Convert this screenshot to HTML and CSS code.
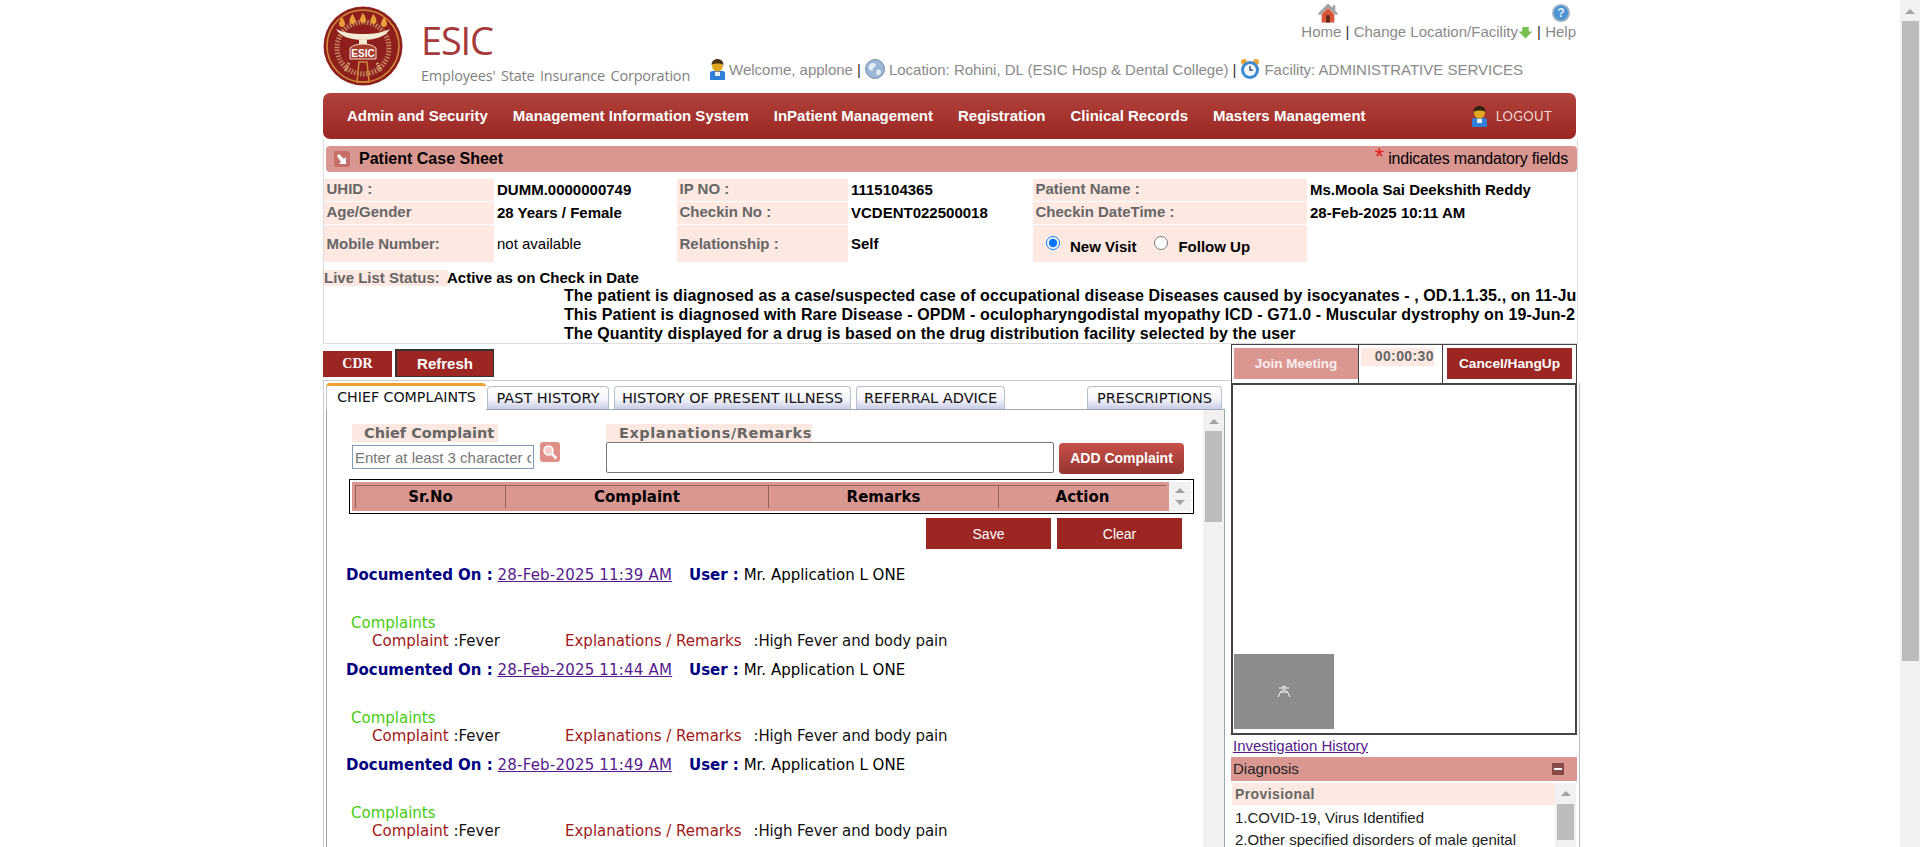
FILE: index.html
```html
<!DOCTYPE html>
<html lang="en">
<head>
    <meta charset="UTF-8">
    <meta name="viewport" content="width=device-width, initial-scale=1.0">
    <title>Patient Case Sheet</title>
    <link rel="stylesheet" href="styles.css">
</head>
<body>
    <div class="page-wrap">
    <div class="page">
        <!-- header -->
        <div class="header">
            <svg class="logo" width="80" height="80" viewBox="0 0 80 80">
                <circle cx="40" cy="40" r="39.5" fill="#8e1f1c"/>
                <circle cx="40" cy="40" r="36" fill="none" stroke="#d08a3c" stroke-width="1.6"/>
                <circle cx="40" cy="42" r="26" fill="none" stroke="#d8a878" stroke-width="5" stroke-dasharray="1.5 1.5" opacity="0.75"/>
                <circle cx="40" cy="40" r="21" fill="#8e1f1c"/>
                <path d="M19 11c-2 3-3 5-3 7s1.500 3 3 3 3-1 3-3-1-4-3-7zM29.500 8c-2 3-3 5-3 7s1.500 3 3 3 3-1 3-3-1-4-3-7zM40 7c-2 3-3 5-3 7s1.500 3 3 3 3-1 3-3-1-4-3-7zM50.500 8c-2 3-3 5-3 7s1.500 3 3 3 3-1 3-3-1-4-3-7zM61 11c-2 3-3 5-3 7s1.500 3 3 3 3-1 3-3-1-4-3-7z" fill="#e8a03c"/>
                <path d="M13 23c4 7 14 11 27 11s23-4 27-11c-8 4-17 5-27 5s-19-1-27-5z" fill="#f5ead2"/>
                <path d="M36 34h8v5h-8z" fill="#f5ead2"/>
                <path d="M27 42c3-3 8-4 13-4s10 1 13 4v11H27z" fill="#a83a2e" stroke="#f0dcc0" stroke-width="1"/>
                <text x="40" y="51" class="logo-text" text-anchor="middle">ESIC</text>
                <path d="M36 56h8l2 20H34z" fill="none" stroke="#d08a3c" stroke-width="1.500"/>
                <path d="M26 57l-4 8M54 57l4 8" stroke="#d8a878" stroke-width="3" stroke-dasharray="1.500 1"/>
            </svg>
            <div class="brand">
                <div class="brand-name">ESIC</div>
                <div class="brand-sub">Employees' State Insurance Corporation</div>
            </div>
            <div class="header-info">
                <div class="top-links">
                    <div class="top-icons">
                        <svg class="home-icon" width="20" height="20" viewBox="0 0 22 21">
                            <path d="M11 0L0 11l2 2 9-8 9 8 2-2-3-3V2h-3v3z" fill="#a2a2a2"/>
                            <path d="M4 12l7-7 7 7v9H4z" fill="#d9553a"/>
                            <path d="M9 13h4v8H9z" fill="#5a2a1e"/>
                        </svg>
                        <svg class="help-icon" width="20" height="20" viewBox="0 0 20 21">
                            <circle cx="10" cy="10.500" r="9.500" fill="#9fb2c4"/>
                            <circle cx="10" cy="10.500" r="7.500" fill="#4a92d4"/>
                            <text x="10" y="15" class="help-mark" text-anchor="middle">?</text>
                        </svg>
                    </div>
                    <div class="link-row">
                        <span>Home</span> <b>|</b> <span>Change Location/Facility</span><svg class="arrow-icon" width="15" height="13" viewBox="0 0 15 14"><path d="M4 1h7v5h4l-7.500 7.500L0 6h4z" fill="#77bf4e"/></svg> <b>|</b> <span>Help</span>
                    </div>
                </div>
                <div class="welcome-row">
                    <svg class="user-icon" width="15" height="21" viewBox="0 0 15 21">
                        <path d="M2 12h11c1 0 2 1 2 2v7H0v-7c0-1 1-2 2-2z" fill="#2f7fd8"/>
                        <path d="M5 13h5v4H5z" fill="#e8f0fa"/>
                        <circle cx="7.500" cy="7" r="5.500" fill="#e0a820"/>
                        <path d="M1.500 6c0-4 3-6 6-6s6 2 6 6c-2-2-10-2-12 0z" fill="#4a3418"/>
                    </svg>
                    <span>Welcome, applone</span> <b>|</b>
                    <svg class="globe-icon" width="20" height="20" viewBox="0 0 20 20">
                        <circle cx="10" cy="10" r="9.500" fill="#9ab8d6" stroke="#7a8ea4"/>
                        <path d="M5 5c3-2 6-1 6 1s-3 2-3 4-3 2-4 0 0-4 1-5zM12 11c2-1 4 0 4 2s-3 4-4 3-1-4 0-5z" fill="#e4edf5"/>
                    </svg>
                    <span>Location: Rohini, DL (ESIC Hosp &amp; Dental College)</span> <b>|</b>
                    <svg class="clock-icon" width="20" height="22" viewBox="0 0 20 22">
                        <circle cx="4" cy="4" r="3" fill="#e8a53a"/>
                        <circle cx="16" cy="4" r="3" fill="#e8a53a"/>
                        <circle cx="10" cy="12" r="9" fill="#3c8ad0"/>
                        <circle cx="10" cy="12" r="6" fill="#f4f8fc"/>
                        <path d="M10 8v4h3" fill="none" stroke="#34536e" stroke-width="1.500"/>
                    </svg>
                    <span>Facility: ADMINISTRATIVE SERVICES</span>
                </div>
            </div>
        </div>

        <!-- main menu -->
        <div class="nav">
            <a class="nav-item">Admin and Security</a>
            <a class="nav-item">Management Information System</a>
            <a class="nav-item">InPatient Management</a>
            <a class="nav-item">Registration</a>
            <a class="nav-item">Clinical Records</a>
            <a class="nav-item">Masters Management</a>
            <div class="logout">
                <svg width="15" height="21" viewBox="0 0 15 21">
                    <path d="M2 12h11c1 0 2 1 2 2v7H0v-7c0-1 1-2 2-2z" fill="#2f7fd8"/>
                    <path d="M5 13h5v4H5z" fill="#e8f0fa"/>
                    <circle cx="7.500" cy="7" r="5.500" fill="#e0a820"/>
                    <path d="M1.500 6c0-4 3-6 6-6s6 2 6 6c-2-2-10-2-12 0z" fill="#2e2210"/>
                </svg>
                <span>LOGOUT</span>
            </div>
        </div>

        <!-- patient details -->
        <div class="patient-panel">
            <div class="section-title">
                <span class="title-icon">
                    <svg width="10" height="10" viewBox="0 0 10 10"><path d="M0 2l2-2 5 5 2-2v7H2l2-2z" fill="#fff"/></svg>
                </span>
                <span class="title-text">Patient Case Sheet</span>
                <span class="mandatory"><i>*</i> indicates mandatory fields</span>
            </div>
            <div class="info-grid">
                <div class="info-label">UHID :</div>
                <div class="info-value">DUMM.0000000749</div>
                <div class="info-label">IP NO :</div>
                <div class="info-value">1115104365</div>
                <div class="info-label">Patient Name :</div>
                <div class="info-value">Ms.Moola Sai Deekshith Reddy</div>

                <div class="info-label">Age/Gender</div>
                <div class="info-value">28 Years / Female</div>
                <div class="info-label">Checkin No :</div>
                <div class="info-value">VCDENT022500018</div>
                <div class="info-label">Checkin DateTime :</div>
                <div class="info-value">28-Feb-2025 10:11 AM</div>

                <div class="info-label info-tall">Mobile Number:</div>
                <div class="info-value info-tall info-plain">not available</div>
                <div class="info-label info-tall">Relationship :</div>
                <div class="info-value info-tall">Self</div>
                <div class="info-label visit-cell">
                    <input type="radio" name="visit" class="visit-radio" checked><span class="visit-text">New Visit</span>
                    <input type="radio" name="visit" class="visit-radio"><span class="visit-text">Follow Up</span>
                </div>
                <div></div>
            </div>
            <div class="live-row">
                <span class="live-label">Live List Status:</span>
                <span class="live-value">Active as on Check in Date</span>
            </div>
            <div class="alerts">
                <div>The patient is diagnosed as a case/suspected case of occupational disease Diseases caused by isocyanates - , OD.1.1.35., on 11-Ju</div>
                <div>This Patient is diagnosed with Rare Disease - OPDM - oculopharyngodistal myopathy ICD - G71.0 - Muscular dystrophy on 19-Jun-2</div>
                <div>The Quantity displayed for a drug is based on the drug distribution facility selected by the user</div>
            </div>
        </div>

        <div class="work">
            <div class="work-left">
                <div class="toolbar">
                    <button class="btn-cdr">CDR</button>
                    <button class="btn-refresh">Refresh</button>
                </div>
                <div class="tab-panel">
                    <div class="tabs">
                        <div class="tab tab-active">CHIEF COMPLAINTS</div>
                        <div class="tab tab-past">PAST HISTORY</div>
                        <div class="tab tab-present">HISTORY OF PRESENT ILLNESS</div>
                        <div class="tab tab-referral">REFERRAL ADVICE</div>
                        <div class="tab tab-presc">PRESCRIPTIONS</div>
                    </div>
                    <div class="tab-body">
                        <div class="tab-content">
                            <div class="complaint-form">
                                <div class="chief-col">
                                    <div class="form-label chief-label">Chief Complaint</div>
                                    <div class="chief-input">
                                        <input type="text" class="text-input" placeholder="Enter at least 3 character of">
                                        <span class="search-btn">
                                            <svg width="16" height="16" viewBox="0 0 16 16">
                                                <circle cx="6.500" cy="6.500" r="4.500" fill="#f6cfca" stroke="#fff" stroke-width="1.500"/>
                                                <path d="M10 10l4.500 4.500" stroke="#fff" stroke-width="2.500"/>
                                            </svg>
                                        </span>
                                    </div>
                                </div>
                                <div class="remarks-col">
                                    <div class="form-label remarks-label">Explanations/Remarks</div>
                                    <textarea class="remarks-input"></textarea>
                                </div>
                                <button class="btn-add">ADD Complaint</button>
                            </div>
                            <div class="grid-box">
                                <div class="grid-head">
                                    <div class="grid-cell cell-sr">Sr.No</div>
                                    <div class="grid-cell cell-complaint">Complaint</div>
                                    <div class="grid-cell cell-remarks">Remarks</div>
                                    <div class="grid-cell cell-action">Action</div>
                                </div>
                                <div class="mini-scroll"><i class="arrow-up"></i><i class="arrow-down"></i></div>
                            </div>
                            <div class="form-actions">
                                <button class="btn-flat">Save</button>
                                <button class="btn-flat">Clear</button>
                            </div>

                            <div class="record">
                                <div class="doc-line"><b>Documented On :</b> <a href="#">28-Feb-2025 11:39 AM</a> <b class="doc-user">User :</b> Mr. Application L ONE</div>
                                <div class="doc-heading">Complaints</div>
                                <div class="doc-item"><span class="doc-key"><em>Complaint</em> :Fever</span><em>Explanations / Remarks</em><span class="doc-val">:High Fever and body pain</span></div>
                            </div>
                            <div class="record">
                                <div class="doc-line"><b>Documented On :</b> <a href="#">28-Feb-2025 11:44 AM</a> <b class="doc-user">User :</b> Mr. Application L ONE</div>
                                <div class="doc-heading">Complaints</div>
                                <div class="doc-item"><span class="doc-key"><em>Complaint</em> :Fever</span><em>Explanations / Remarks</em><span class="doc-val">:High Fever and body pain</span></div>
                            </div>
                            <div class="record">
                                <div class="doc-line"><b>Documented On :</b> <a href="#">28-Feb-2025 11:49 AM</a> <b class="doc-user">User :</b> Mr. Application L ONE</div>
                                <div class="doc-heading">Complaints</div>
                                <div class="doc-item"><span class="doc-key"><em>Complaint</em> :Fever</span><em>Explanations / Remarks</em><span class="doc-val">:High Fever and body pain</span></div>
                            </div>
                        </div>
                        <div class="panel-scroll"><i class="arrow-up"></i><div class="panel-thumb"></div></div>
                    </div>
                </div>
            </div>

            <div class="work-right">
                <div class="meeting-row">
                    <button class="btn-join">Join Meeting</button>
                    <div class="timer-cell"><span class="timer">00:00:30</span></div>
                    <div class="cancel-cell"><button class="btn-cancel">Cancel/HangUp</button></div>
                </div>
                <div class="side-lower">
                    <div class="video-box">
                        <div class="video-thumb">
                            <svg width="14" height="14" viewBox="0 0 14 14">
                                <path d="M2 3h10M5 1l2 1 2-1M5 5h4M4 6l-3 6M10 6l3 6M4 7h6" stroke="#fff" stroke-width="1" fill="none"/>
                            </svg>
                        </div>
                    </div>
                    <a class="history-link" href="#">Investigation History</a>
                    <div class="diag-bar">
                        <span>Diagnosis</span>
                        <span class="diag-toggle"></span>
                    </div>
                    <div class="diag-body">
                        <div class="diag-list">
                            <div class="diag-head">Provisional</div>
                            <div class="diag-line">1.COVID-19, Virus Identified</div>
                            <div class="diag-line">2.Other specified disorders of male genital</div>
                        </div>
                        <div class="diag-scroll"><i class="arrow-up"></i><div class="diag-thumb"></div></div>
                    </div>
                </div>
            </div>
        </div>
    </div>
    </div>
    <div class="page-scroll"><i class="arrow-up"></i><div class="page-thumb"></div></div>
</body>
</html>
```

FILE: styles.css
```css
html, body {
    height: 847px;
    margin: 0;
    overflow: hidden;
}
body {
    display: flex;
    background: #fff;
    font-family: "Liberation Sans", Arial, sans-serif;
    font-size: 15px;
    color: #000;
}
button {
    font-family: "Liberation Sans", Arial, sans-serif;
    border: 0;
    padding: 0;
    color: #fff;
}
.page-wrap {
    flex: 1;
    min-width: 0;
    height: 847px;
    overflow: hidden;
}
.page {
    width: 1257px;
    margin-left: 323px;
}

/* scrollbars */
.page-scroll {
    width: 20px;
    height: 847px;
    background: #f1f1f1;
    display: flex;
    flex-direction: column;
    align-items: center;
}
.page-scroll .arrow-up {
    margin-top: 9px;
}
.page-thumb {
    width: 17px;
    height: 640px;
    margin-top: 7px;
    background: #bcbcbc;
}
.arrow-up {
    display: block;
    width: 0;
    height: 0;
    border-left: 5px solid transparent;
    border-right: 5px solid transparent;
    border-bottom: 5px solid #a3a3a3;
}
.arrow-down {
    display: block;
    width: 0;
    height: 0;
    border-left: 5px solid transparent;
    border-right: 5px solid transparent;
    border-top: 5px solid #a3a3a3;
}

/* header */
.header {
    height: 93px;
    display: flex;
}
.logo {
    margin-top: 6px;
    flex: none;
}
.logo-text {
    font: bold 10px "Liberation Sans", sans-serif;
    fill: #fff;
}
.help-mark {
    font: bold 13px "Liberation Sans", sans-serif;
    fill: #e6f1fa;
}
.brand {
    width: 286px;
    margin-left: 18px;
    flex: none;
    font-family: "Open Sans", sans-serif;
}
.brand-name {
    margin-top: 16px;
    font-size: 38px;
    line-height: 48px;
    letter-spacing: -1.2px;
    color: #a8393a;
}
.brand-sub {
    margin-top: 2px;
    font-size: 14.500px;
    line-height: 20px;
    letter-spacing: -0.2px;
    color: #7f7f7f;
    word-spacing: 2px;
    white-space: nowrap;
}
.header-info {
    flex: 1;
    min-width: 0;
    color: #8a8a8a;
}
.header-info b {
    font-weight: normal;
    color: #333;
}
.top-links {
    height: 57px;
    text-align: right;
    padding-right: 4px;
}
.top-icons {
    display: flex;
    justify-content: flex-end;
    padding-top: 3px;
    height: 20px;
}
.home-icon {
    margin-right: 213px;
}
.help-icon {
    margin-right: 5px;
}
.link-row {
    line-height: 18px;
}
.arrow-icon {
    vertical-align: -2px;
}
.welcome-row {
    display: flex;
    align-items: center;
    gap: 4px;
    height: 24px;
    padding-left: 3px;
    white-space: nowrap;
}
.user-icon {
    flex: none;
}
.globe-icon, .clock-icon {
    flex: none;
}

/* nav */
.nav {
    width: 1253px;
    height: 46px;
    box-sizing: border-box;
    display: flex;
    align-items: center;
    gap: 25px;
    padding: 0 24px 2px 24px;
    border-radius: 7px;
    background: linear-gradient(#b1423c, #9b2622);
}
.nav-item {
    font-weight: bold;
    color: #fff;
    font-size: 15px;
    white-space: nowrap;
}
.logout {
    margin-left: auto;
    display: flex;
    align-items: center;
    gap: 9px;
    padding-top: 2px;
    color: #eed6d2;
    font-family: "Lato", sans-serif;
    font-size: 13px;
    letter-spacing: 0.4px;
}

/* patient panel */
.patient-panel {
    width: 1255px;
    height: 205px;
    box-sizing: border-box;
    padding-top: 7px;
    border-left: 1px solid #ddd;
    border-right: 1px solid #ddd;
    border-bottom: 1px solid #ddd;
    overflow: hidden;
}
.section-title {
    height: 26px;
    margin-left: 2px;
    display: flex;
    align-items: center;
    background: #da9792;
    border-radius: 4px;
}
.title-icon {
    width: 16px;
    height: 16px;
    margin-left: 8px;
    border-radius: 2px;
    background: #c66f69;
    display: flex;
    align-items: center;
    justify-content: center;
}
.title-text {
    margin-left: 9px;
    font-weight: bold;
    font-size: 16px;
}
.mandatory {
    margin-left: auto;
    margin-right: 9px;
    font-size: 16px;
    letter-spacing: -0.2px;
}
.mandatory i {
    font-style: normal;
    font-size: 24px;
    line-height: 10px;
    color: #e02020;
    vertical-align: -1px;
}
.info-grid {
    display: grid;
    grid-template-columns: 170px 183px 171px 185px 274px 1fr;
    grid-template-rows: 22px 22px 37px;
    row-gap: 1px;
    margin-top: 7px;
}
.info-label {
    background: #fde8e2;
    color: #666;
    font-weight: bold;
    padding: 1px 2.500px;
    line-height: 18px;
    white-space: nowrap;
}
.info-value {
    padding: 2px 3px;
    font-weight: bold;
    line-height: 18px;
    white-space: nowrap;
}
.info-tall {
    padding-top: 10px;
}
.info-plain {
    font-weight: normal;
}
.visit-cell {
    padding: 8px 0 0 13px;
    display: flex;
    align-items: flex-start;
    color: #000;
}
.visit-radio {
    width: 14px;
    height: 14px;
    margin: 3px 0 0 0;
}
.visit-text {
    margin: 5px 18px 0 10px;
}
.live-row {
    margin-top: 8px;
    display: flex;
    font-weight: bold;
    line-height: 16px;
}
.live-label {
    width: 124px;
    background: #fde8e2;
    color: #666;
    white-space: nowrap;
    overflow: hidden;
}
.live-value {
    margin-left: -1px;
}
.alerts {
    margin-left: 240px;
    font-weight: bold;
    font-size: 16px;
    line-height: 19px;
    white-space: nowrap;
    letter-spacing: 0.1px;
    overflow: hidden;
}

/* working area */
.work {
    display: flex;
    align-items: flex-start;
}
.work-left {
    width: 908px;
    flex: none;
}
.toolbar {
    height: 36px;
    display: flex;
    align-items: flex-end;
    gap: 3px;
    padding-bottom: 3px;
    box-sizing: border-box;
}
.btn-cdr {
    width: 69px;
    height: 26px;
    background: #9c2622;
    font: bold 14px "Liberation Serif", serif;
}
.btn-refresh {
    width: 99px;
    height: 28px;
    background: #9c2622;
    font-weight: bold;
    font-size: 15px;
    border-top: 2px solid #333;
    border-left: 2px solid #333;
    border-right: 1px solid #333;
    border-bottom: 1px solid #333;
}
.tab-panel {
    height: 467px;
    border-top: 1px solid #ccc;
    border-left: 1px solid #ccc;
    box-sizing: border-box;
    font-family: "DejaVu Sans", sans-serif;
}
.tabs {
    height: 28px;
    padding-left: 2px;
    display: flex;
    align-items: flex-end;
    font-size: 14.500px;
}
.tab {
    height: 23px;
    box-sizing: border-box;
    text-align: center;
    line-height: 22px;
    border: 1px solid #b5c0cc;
    border-bottom: 0;
    border-radius: 4px 4px 0 0;
    background: linear-gradient(#fff, #f4f5fa 55%, #c9cde6);
    color: #111;
    white-space: nowrap;
}
.tab-active {
    width: 160px;
    height: 27px;
    margin-bottom: -1px;
    border: 0;
    border-top: 3px solid #f0a030;
    border-left: 1px solid #c0ccd0;
    background: #fff;
    line-height: 23px;
    font-size: 14.200px;
}
.tab-past {
    width: 122px;
    margin-left: 1px;
}
.tab-present {
    width: 237px;
    margin-left: 5px;
}
.tab-referral {
    width: 149px;
    margin-left: 5px;
}
.tab-presc {
    width: 135px;
    margin-left: 82px;
}
.tab-body {
    width: 899px;
    height: 439px;
    margin-left: 2px;
    box-sizing: border-box;
    display: flex;
    border: 1px solid #9aa8b0;
    border-bottom: 0;
    background: #fff;
}
.tab-content {
    flex: 1;
    min-width: 0;
}
.complaint-form {
    display: flex;
    align-items: flex-start;
    padding: 14px 0 0 25px;
}
.form-label {
    font-weight: bold;
    font-size: 14.500px;
    line-height: 18px;
    color: #666;
    background: #fde8e2;
    box-sizing: border-box;
    white-space: nowrap;
}
.chief-col {
    width: 254px;
    flex: none;
}
.chief-label {
    width: 146px;
    padding-left: 12px;
}
.chief-input {
    display: flex;
    align-items: flex-start;
}
.text-input {
    width: 182px;
    height: 24px;
    margin-top: 3px;
    padding: 0 2px;
    box-sizing: border-box;
    border: 1px solid #7f9db9;
    font-family: "Liberation Sans", sans-serif;
    font-size: 15px;
}
.text-input::placeholder {
    color: #777;
}
.search-btn {
    width: 20px;
    height: 20px;
    margin-left: 6px;
    border-radius: 3px;
    background: #e08e88;
    display: flex;
    align-items: center;
    justify-content: center;
}
.remarks-col {
    width: 448px;
    flex: none;
}
.remarks-label {
    width: 206px;
    padding-left: 13px;
    letter-spacing: 0.55px;
}
.remarks-input {
    display: block;
    width: 448px;
    height: 31px;
    box-sizing: border-box;
    border: 1px solid #767676;
    border-radius: 2px;
    padding: 0;
    resize: none;
}
.btn-add {
    width: 125px;
    height: 31px;
    margin: 19px 0 0 5px;
    padding-bottom: 2px;
    border-radius: 4px;
    background: linear-gradient(#c9504a, #94352f);
    font-weight: bold;
    font-size: 14px;
    flex: none;
}
.grid-box {
    width: 845px;
    height: 35px;
    margin: 5px 0 0 22px;
    padding: 2px;
    box-sizing: border-box;
    border: 1px solid #000;
    display: flex;
    font-family: "DejaVu Sans", sans-serif;
}
.grid-head {
    width: 817px;
    padding: 3px 3px 0 3px;
    box-sizing: border-box;
    display: flex;
    background: #da9792;
}
.grid-cell {
    height: 23px;
    box-sizing: border-box;
    border-top: 1px solid #96605c;
    border-left: 1px solid #96605c;
    font-weight: bold;
    font-size: 15px;
    line-height: 22px;
    text-align: center;
}
.cell-sr {
    width: 150px;
}
.cell-complaint {
    width: 263px;
}
.cell-remarks {
    width: 230px;
}
.cell-action {
    width: 168px;
}
.mini-scroll {
    flex: 1;
    background: #f1f1f1;
    display: flex;
    flex-direction: column;
    align-items: center;
    justify-content: center;
    gap: 7px;
}
.form-actions {
    display: flex;
    gap: 6px;
    margin: 4px 0 0 599px;
}
.btn-flat {
    width: 125px;
    height: 31px;
    background: #9c2622;
    font-size: 14px;
}
.record {
    height: 95px;
    padding-left: 19px;
    font-family: "DejaVu Sans", sans-serif;
    font-size: 15px;
    line-height: 19px;
    white-space: nowrap;
    box-sizing: border-box;
}
.form-actions + .record {
    margin-top: 17px;
}
.doc-line b {
    color: #000080;
}
.doc-line a {
    color: #551a8b;
    letter-spacing: 0.2px;
}
.doc-user {
    margin-left: 12px;
}
.doc-heading {
    margin: 29px 0 0 5px;
    color: #44cc11;
}
.doc-item {
    margin-top: -1px;
    padding-left: 26px;
    color: #111;
}
.doc-item em {
    font-style: normal;
    color: #a01818;
}
.doc-key {
    display: inline-block;
    width: 193px;
}
.doc-val {
    margin-left: 12px;
    letter-spacing: -0.15px;
}
.panel-scroll {
    width: 21px;
    flex: none;
    background: #f1f1f1;
    display: flex;
    flex-direction: column;
    align-items: center;
}
.panel-scroll .arrow-up {
    margin-top: 9px;
}
.panel-thumb {
    width: 17px;
    height: 91px;
    margin-top: 7px;
    background: #bcbcbc;
}

/* right column */
.work-right {
    width: 349px;
    flex: none;
}
.meeting-row {
    width: 346px;
    height: 39px;
    box-sizing: border-box;
    display: flex;
    border: 1px solid #444;
    border-bottom: 0;
}
.btn-join {
    width: 124px;
    height: 31px;
    margin: 3px 0 0 2px;
    background: #da9792;
    font-weight: bold;
    font-size: 13.500px;
    color: #fbeeee;
    flex: none;
}
.timer-cell {
    width: 85px;
    flex: none;
    border-left: 1px solid #444;
    border-right: 1px solid #444;
    box-sizing: border-box;
    padding: 3px 0 0 2px;
}
.timer {
    display: block;
    width: 73px;
    height: 18px;
    line-height: 16px;
    background: #fde8e2;
    color: #666;
    font-size: 14px;
    font-weight: bold;
    text-align: right;
    letter-spacing: 0.4px;
}
.cancel-cell {
    flex: 1;
    padding: 3px 0 0 4px;
}
.btn-cancel {
    width: 125px;
    height: 31px;
    background: #9c2622;
    font-weight: bold;
    font-size: 13.700px;
}
.side-lower {
    border-right: 1px solid #bbb;
    height: 465px;
    overflow: hidden;
}
.video-box {
    width: 346px;
    height: 352px;
    box-sizing: border-box;
    border: 2px solid #444;
    display: flex;
    align-items: flex-end;
    padding: 0 0 4px 1px;
}
.video-thumb {
    width: 100px;
    height: 75px;
    background: #8c8c8c;
    display: flex;
    align-items: center;
    justify-content: center;
}
.history-link {
    display: block;
    height: 22px;
    line-height: 22px;
    margin-left: 2px;
    color: #551a8b;
}
.diag-bar {
    width: 347px;
    height: 24px;
    margin-left: -1px;
    display: flex;
    align-items: center;
    justify-content: space-between;
    background: #da9792;
    color: #222;
    box-sizing: border-box;
    padding: 0 13px 2px 3px;
}
.diag-toggle {
    width: 12px;
    height: 12px;
    margin-top: 2px;
    background: #864a46;
    position: relative;
}
.diag-toggle::after {
    content: "";
    position: absolute;
    left: 2px;
    top: 5px;
    width: 8px;
    height: 2px;
    background: #fff;
}
.diag-body {
    display: flex;
    margin-top: 2px;
    padding-left: 1px;
}
.diag-list {
    width: 323px;
    flex: none;
    white-space: nowrap;
}
.diag-head {
    height: 22px;
    line-height: 22px;
    background: #fde8e2;
    padding-left: 3px;
    font-weight: bold;
    font-size: 14px;
    color: #666;
    letter-spacing: 0.4px;
}
.diag-line {
    height: 22px;
    line-height: 26px;
    padding-left: 3px;
    color: #222;
}
.diag-scroll {
    width: 21px;
    height: 70px;
    background: #f1f1f1;
    display: flex;
    flex-direction: column;
    align-items: center;
}
.diag-scroll .arrow-up {
    margin-top: 8px;
}
.diag-thumb {
    width: 17px;
    height: 36px;
    margin-top: 8px;
    background: #bcbcbc;
}
```
